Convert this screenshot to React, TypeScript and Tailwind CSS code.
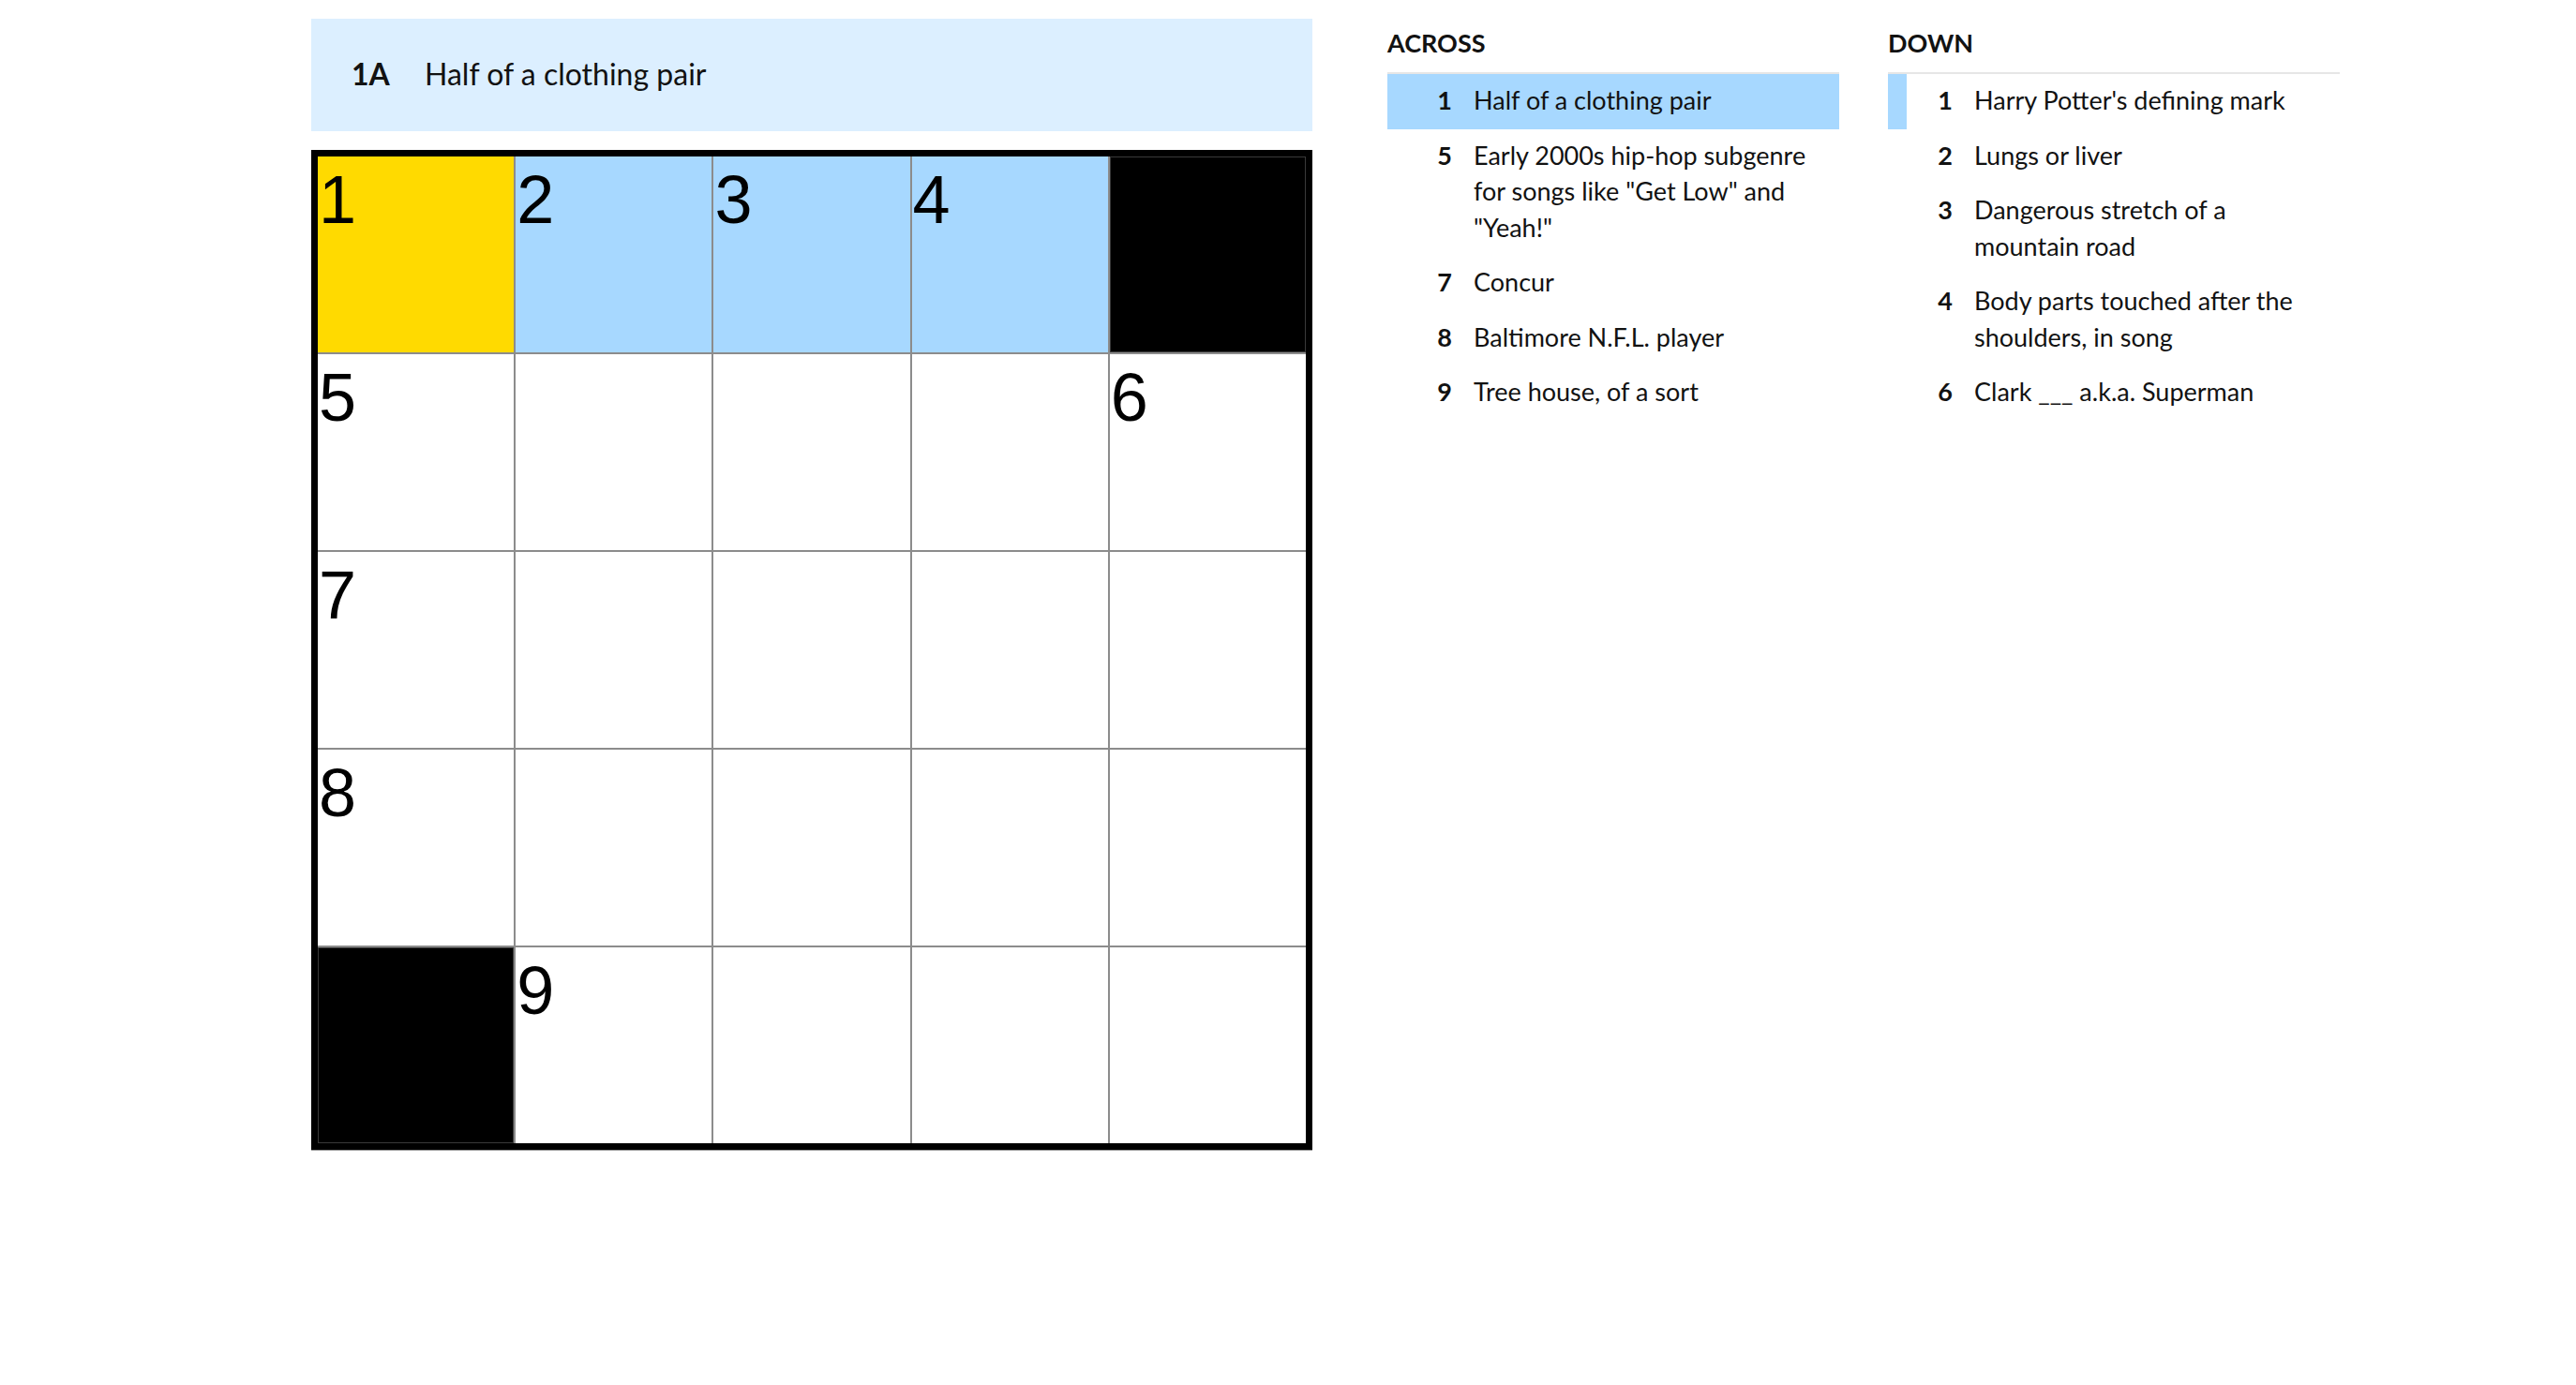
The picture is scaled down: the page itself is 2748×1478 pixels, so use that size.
import React from 'react'

type Cell = { label?: string; block?: boolean }

// 5x5 mini puzzle layout
const GRID: Cell[][] = [
  [{ label: '1' }, { label: '2' }, { label: '3' }, { label: '4' }, { block: true }],
  [{ label: '5' }, {}, {}, {}, { label: '6' }],
  [{ label: '7' }, {}, {}, {}, {}],
  [{ label: '8' }, {}, {}, {}, {}],
  [{ block: true }, { label: '9' }, {}, {}, {}],
]

const ACROSS = [
  { n: 1, text: 'Half of a clothing pair' },
  { n: 5, text: 'Early 2000s hip-hop subgenre for songs like "Get Low" and "Yeah!"' },
  { n: 7, text: 'Concur' },
  { n: 8, text: 'Baltimore N.F.L. player' },
  { n: 9, text: 'Tree house, of a sort' },
]

const DOWN = [
  { n: 1, text: "Harry Potter's defining mark" },
  { n: 2, text: 'Lungs or liver' },
  { n: 3, text: 'Dangerous stretch of a mountain road' },
  { n: 4, text: 'Body parts touched after the shoulders, in song' },
  { n: 6, text: 'Clark ___ a.k.a. Superman' },
]

const selected = { row: 0, col: 0 }

function cellColor(r: number, c: number, cell: Cell) {
  if (cell.block) return 'bg-black'
  if (r === selected.row && c === selected.col) return 'bg-[#ffda00]'
  if (r === selected.row) return 'bg-[#a7d8ff]'
  return 'bg-white'
}

function ClueList({
  title,
  clues,
  active,
  related,
}: {
  title: string
  clues: { n: number; text: string }[]
  active?: number
  related?: number
}) {
  return (
    <div className="w-[482px]">
      <h3 className="pt-[10px] pb-[15px] text-[27px] leading-[32px] font-bold text-[#121212]">{title}</h3>
      <ol className="border-t-2 border-[#e6e6e6]">
        {clues.map(c => {
          const isActive = c.n === active
          const isRelated = c.n === related
          return (
            <li
              key={c.n}
              className={
                'flex pt-[9px] pb-[11px] border-l-[20px] ' +
                (isActive ? 'bg-[#a7d8ff] border-[#a7d8ff]' : isRelated ? 'border-[#a7d8ff]' : 'border-transparent')
              }
            >
              <span className="w-[49px] shrink-0 text-right font-bold text-[27px] leading-[38.5px] text-[#121212]">
                {c.n}
              </span>
              <span className="ml-[23px] pr-[12px] text-[27px] leading-[38.5px] text-[#121212]">{c.text}</span>
            </li>
          )
        })}
      </ol>
    </div>
  )
}

export default function App() {
  return (
    <div className="min-h-screen bg-white pl-[332px] pt-[20px] font-['Lato','Noto_Sans',sans-serif]">
      <div className="flex">
        <div className="w-[1068px] shrink-0">
          {/* current clue bar */}
          <div className="h-[120px] bg-[#dcefff] flex items-center pl-[43px] pb-[2px] text-[#121212]">
            <span className="w-[78px] text-[32px] font-bold">1A</span>
            <span className="text-[32px]">Half of a clothing pair</span>
          </div>

          {/* board */}
          <div className="mt-[20px] w-[1068px] h-[1067px] border-[7px] border-black bg-[#8c8c8c] grid grid-cols-5 grid-rows-5 gap-[2px] shadow-[0_1px_0_#9a9a9a]">
            {GRID.map((row, r) =>
              row.map((cell, c) => (
                <div
                  key={`${r}-${c}`}
                  className={cellColor(r, c, cell) + ' relative' + (cell.block ? ' outline outline-1 -outline-offset-1 outline-[#3a3a3a]' : '')}
                >
                  {cell.label && (
                    <span className="absolute left-[1px] top-[10px] font-['Liberation_Sans',Arial,sans-serif] text-[72px] leading-none text-black">
                      {cell.label}
                    </span>
                  )}
                </div>
              ))
            )}
          </div>
        </div>

        <div className="ml-[80px] flex gap-[52px]">
          <ClueList title="ACROSS" clues={ACROSS} active={1} />
          <ClueList title="DOWN" clues={DOWN} related={1} />
        </div>
      </div>
    </div>
  )
}
